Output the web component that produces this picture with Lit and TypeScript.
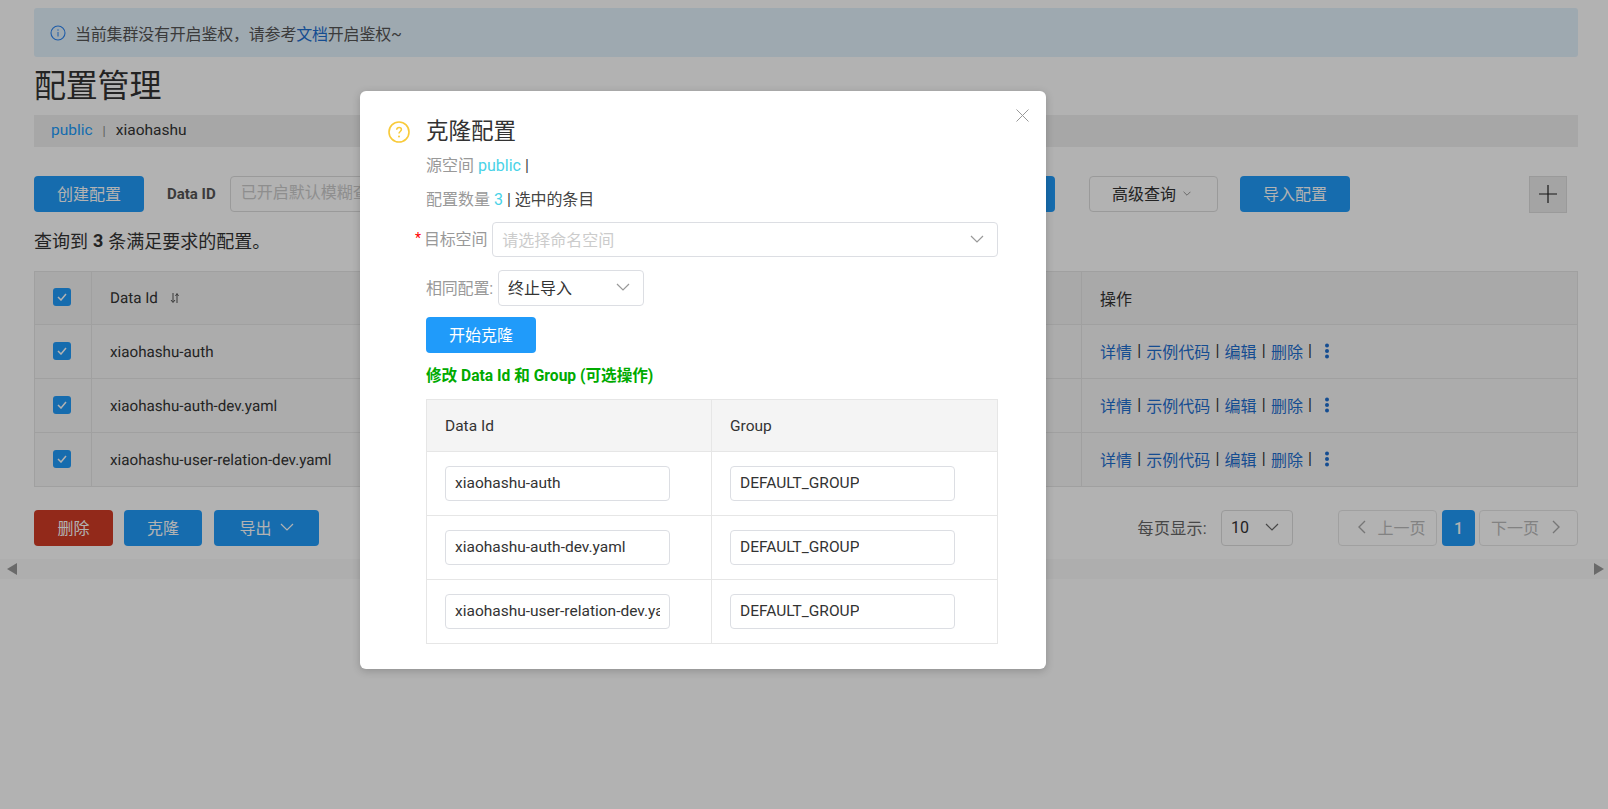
import { LitElement, html, css, svg } from "lit";
import { customElement } from "lit/decorators.js";

const chevron = (w = 14, h = 8, c = "#999") => html`<svg width=${w} height=${h} viewBox="0 0 14 8" fill="none"><path d="M1 1l6 6 6-6" stroke=${c} stroke-width="1.2"/></svg>`;
const check = html`<span class="cb"><svg width="10" height="8" viewBox="0 0 10 8" fill="none"><path d="M1 4l3 3 5-6" stroke="#fff" stroke-width="1.5"/></svg></span>`;
const dots = html`<svg class="dots" width="4" height="16" viewBox="0 0 4 16" fill="#1f6fd0">${svg`<circle cx="2" cy="2.5" r="2"/><circle cx="2" cy="8" r="2"/><circle cx="2" cy="13.5" r="2"/>`}</svg>`;
const rows = ["xiaohashu-auth", "xiaohashu-auth-dev.yaml", "xiaohashu-user-relation-dev.yaml"];

@customElement("app-root")
export class AppRoot extends LitElement {
  static styles = css`
    :host { display: block; position: relative; width: 1608px; height: 809px; overflow: hidden; background: #fff; font-family: Roboto, "Noto Sans CJK SC", sans-serif; color: #333; font-size: 14px; }
    * { box-sizing: border-box; }
    .page { padding: 8px 30px 0 34px; }
    .alert { height: 49px; background: #e3f2fd; border-radius: 3px; display: flex; align-items: center; padding-left: 16px; font-size: 16px; gap: 9px; color: #555; letter-spacing: -0.2px; }
    .alert a, .ops a { color: #1f6fd0; }
    h1 { margin: 0; height: 58px; font-size: 32px; font-weight: 400; line-height: 58px; letter-spacing: -0.2px; }
    .crumb { height: 32px; background: #f0f0f0; padding: 0 0 2px 17px; display: flex; align-items: center; font-size: 15.500px; }
    .crumb .pub { color: #209bfa; }
    .crumb .sep { color: #888; margin: 0 10px; font-size: 13px; }
    .tools { display: flex; align-items: center; margin-top: 29px; height: 36px; }
    .btn { height: 36px; border-radius: 4px; background: #209bfa; color: #fff; font-size: 16px; display: flex; align-items: center; justify-content: center; gap: 8px; padding-bottom: 2px; }
    .b110 { width: 110px; }
    .lbl { margin: 0 14px 0 23px; font-weight: 700; color: #555; font-size: 15px; white-space: nowrap; }
    .search { width: 300px; height: 36px; border: 1px solid #ddd; border-radius: 4px; padding-left: 10px; line-height: 32px; color: #ccc; font-size: 16px; white-space: nowrap; overflow: hidden; }
    .spacer { flex: 1; }
    .gh { width: 129px; height: 36px; border: 1px solid #ddd; border-radius: 4px; margin: 0 22px 0 34px; display: flex; align-items: center; justify-content: center; gap: 7px; font-size: 16px; padding: 0 4px 2px 0; }
    .plus { width: 38px; height: 37px; margin: 0 11px 0 179px; background: #ebebeb; border: 1px solid #ddd; display: flex; align-items: center; justify-content: center; }
    .count { height: 59px; display: flex; align-items: center; font-size: 18px; padding-bottom: 3px; }
    .count b { margin: 0 5px; }
    .grid { display: grid; grid-template-columns: 56px 1fr 496px; border: 1px solid #e6e6e6; border-bottom: 0; background: #f7f7f7; }
    .grid > div { height: 54px; border-bottom: 1px solid #e6e6e6; display: flex; align-items: center; font-size: 16px; padding-bottom: 2px; }
    .grid > div + div { border-left: 1px solid #e6e6e6; padding-left: 18px; }
    .grid > .c1 { padding-left: 18px; border-left: 0; }
    .grid > .h { height: 53px; background: #f2f2f2; }
    .grid > .h + .h { padding-bottom: 0; }
    .grid > .latin { font-size: 15.200px; text-rendering: geometricPrecision; padding-bottom: 0; }
    .cb { width: 18px; height: 18px; background: #209bfa; border-radius: 3px; display: flex; align-items: center; justify-content: center; }
    .sort { margin-left: 12px; }
    .ops { gap: 5.200px; white-space: nowrap; }
    .dots { margin-left: 8px; }
    .foot { display: flex; align-items: center; margin-top: 23px; height: 36px; }
    .del { width: 79px; background: #d23c26; margin-right: 11px; }
    .cl { width: 78px; margin-right: 12px; }
    .ex { width: 105px; }
    .per { margin-left: auto; color: #666; font-size: 16px; letter-spacing: 0.3px; padding-bottom: 2px; }
    .sz { width: 72px; height: 36px; margin: 0 45px 0 14px; border: 1px solid #ddd; border-radius: 4px; display: flex; align-items: center; justify-content: space-between; padding: 0 13px 2px 9px; font-size: 16px; }
    .pg { width: 99px; height: 36px; border: 1px solid #e6e6e6; border-radius: 4px; color: #bbb; display: flex; align-items: center; justify-content: center; gap: 11px; font-size: 16px; padding-bottom: 2px; }
    .prev { padding-left: 8px; }
    .next { padding-right: 5px; gap: 13px; }
    .cur { width: 33px; height: 36px; margin: 0 4px 0 5px; border-radius: 4px; background: #209bfa; color: #fff; display: flex; align-items: center; justify-content: center; font-size: 16px; font-weight: 500; }
    .band { margin: 13px -30px 0 -34px; height: 20px; background: #fafafa; display: flex; align-items: center; justify-content: space-between; padding: 0 4px 0 7px; }
    .overlay { position: absolute; inset: 0; background: rgba(0, 0, 0, 0.3); }
    .dialog { position: absolute; left: 360px; top: 91px; width: 686px; height: 578px; background: #fff; border-radius: 6px; box-shadow: 0 2px 8px rgba(0, 0, 0, 0.2); display: flex; padding: 30px 48px 0 28px; gap: 16px; font-size: 16px; }
    .q { flex: none; }
    .close { position: absolute; right: 17px; top: 18px; }
    .body { flex: 1; min-width: 0; }
    .body > .ttl { height: 28px; line-height: 28px; font-size: 22.500px; margin-top: -4px; }
    .line { height: 24px; line-height: 24px; color: #999; white-space: nowrap; }
    .l1 { margin-top: 9px; }
    .l2 { margin-top: 10px; }
    .line i { font-style: normal; color: #49d2e7; }
    .line span { color: #444; letter-spacing: -0.1px; }
    .sel { height: 35px; border: 1px solid #dcdee3; border-radius: 4px; display: flex; align-items: center; justify-content: space-between; background: #fff; padding-bottom: 2px; }
    .frow { display: flex; align-items: center; color: #999; white-space: nowrap; }
    .fl { margin-bottom: 3px; }
    .target { margin: 10px 0 0 -11px; letter-spacing: -0.2px; }
    .target em { color: #f00; font-style: normal; width: 9px; font-size: 14px; margin-bottom: 3px; }
    .target .sel { flex: 1; margin-left: 5px; padding: 0 13px 2px 9px; color: #ccc; letter-spacing: 0; }
    .same { margin-top: 13px; letter-spacing: -0.2px; }
    .same .sel { width: 146px; height: 36px; margin-left: 5px; padding: 0 13px 2px 9px; color: #333; letter-spacing: 0; }
    .go { width: 110px; margin-top: 11px; }
    .green { height: 46px; line-height: 46px; color: #00aa00; font-weight: 700; font-size: 15.600px; white-space: nowrap; }
    .t2 { display: grid; grid-template-columns: 284px 1fr; border: 1px solid #e6e6e6; border-bottom: 0; font-size: 15.500px; }
    .t2 > div { height: 64px; padding-left: 18px; display: flex; align-items: center; border-bottom: 1px solid #e6e6e6; }
    .t2 > div:nth-child(even) { border-left: 1px solid #e6e6e6; }
    .t2 > .th { height: 52px; background: #f4f4f4; }
    .inp { width: 225px; height: 35px; margin-bottom: 1px; border: 1px solid #dcdee3; border-radius: 4px; padding: 0 9px; display: flex; align-items: center; }
    .inp span { overflow: hidden; white-space: nowrap; }
  `;

  render() {
    return html`
      <div class="page">
        <div class="alert">
          <svg width="16" height="16" viewBox="0 0 16 16" fill="none"><circle cx="8" cy="8" r="7" stroke="#2b84f0" stroke-width="1.1"/><path d="M8 7v4.500" stroke="#2b84f0"/><circle cx="8" cy="5" r=".7" fill="#2b84f0"/></svg>
          <div>当前集群没有开启鉴权，请参考<a>文档</a>开启鉴权~</div>
        </div>
        <h1>配置管理</h1>
        <div class="crumb"><span class="pub">public</span><span class="sep">|</span><span>xiaohashu</span></div>
        <div class="tools">
          <div class="btn b110">创建配置</div>
          <div class="lbl">Data ID</div>
          <div class="search">已开启默认模糊查询</div>
          <div class="spacer"></div>
          <div class="btn b110"></div>
          <div class="gh">高级查询 ${chevron(8, 5, "#666")}</div>
          <div class="btn b110">导入配置</div>
          <div class="plus"><svg width="18" height="18" viewBox="0 0 18 18"><path d="M0 9h18M9 0v18" stroke="#222" stroke-width="1.2"/></svg></div>
        </div>
        <div class="count">查询到<b>3</b>条满足要求的配置。</div>
        <div class="grid">
          <div class="c1 h">${check}</div>
          <div class="h latin">Data Id<svg class="sort" width="10" height="12" viewBox="0 0 10 12" fill="none" stroke="#555"><path d="M3 1v9M1 8l2 2.500 2-2.500M7 11V2M5.500 4L7 1.500 8.500 4"/></svg></div>
          <div class="h">操作</div>
          ${rows.map((r) => html`
            <div class="c1">${check}</div>
            <div class="latin">${r}</div>
            <div class="ops"><a>详情</a>|<a>示例代码</a>|<a>编辑</a>|<a>删除</a>|${dots}</div>
          `)}
        </div>
        <div class="foot">
          <div class="btn del">删除</div>
          <div class="btn cl">克隆</div>
          <div class="btn ex">导出 ${chevron(14, 8, "#fff")}</div>
          <div class="per">每页显示:</div>
          <div class="sz">10 ${chevron(14, 8, "#666")}</div>
          <div class="pg prev"><svg width="9" height="14" viewBox="0 0 9 14" fill="none"><path d="M8 1L2 7l6 6" stroke="#aaa" stroke-width="1.4"/></svg>上一页</div>
          <div class="cur">1</div>
          <div class="pg next">下一页<svg width="9" height="14" viewBox="0 0 9 14" fill="none"><path d="M1 1l6 6-6 6" stroke="#aaa" stroke-width="1.4"/></svg></div>
        </div>
        <div class="band">
          <svg width="10" height="12" viewBox="0 0 10 12"><path d="M10 0v12L0 6z" fill="#999"/></svg>
          <svg width="10" height="12" viewBox="0 0 10 12"><path d="M0 0v12l10-6z" fill="#999"/></svg>
        </div>
      </div>
      <div class="overlay"></div>
      <div class="dialog">
        <svg class="q" width="22" height="22" viewBox="0 0 22 22" fill="none"><circle cx="11" cy="11" r="10" stroke="#f8ca3a" stroke-width="1.6"/><path d="M8.700 8.800c0-1.400 1-2.300 2.400-2.300s2.300.9 2.300 2.100c0 1.900-2.400 1.900-2.400 4" stroke="#f8ca3a" stroke-width="1.500"/><circle cx="11" cy="15.500" r="1" fill="#f8ca3a"/></svg>
        <div class="body">
          <div class="ttl">克隆配置</div>
          <div class="line l1">源空间 <i>public</i> <span>|</span></div>
          <div class="line l2">配置数量 <i>3</i> <span>| 选中的条目</span></div>
          <div class="frow target"><em>*</em><span class="fl">目标空间</span><div class="sel">请选择命名空间 ${chevron()}</div></div>
          <div class="frow same"><span class="fl">相同配置:</span><div class="sel">终止导入 ${chevron()}</div></div>
          <div class="btn go">开始克隆</div>
          <div class="green">修改 Data Id 和 Group (可选操作)</div>
          <div class="t2">
            <div class="th">Data Id</div>
            <div class="th">Group</div>
            ${rows.map((r) => html`
              <div><div class="inp"><span>${r}</span></div></div>
              <div><div class="inp"><span>DEFAULT_GROUP</span></div></div>
            `)}
          </div>
        </div>
        <svg class="close" width="13" height="13" viewBox="0 0 13 13"><path d="M.5.500l12 12M12.500.500l-12 12" stroke="#999"/></svg>
      </div>
    `;
  }
}
